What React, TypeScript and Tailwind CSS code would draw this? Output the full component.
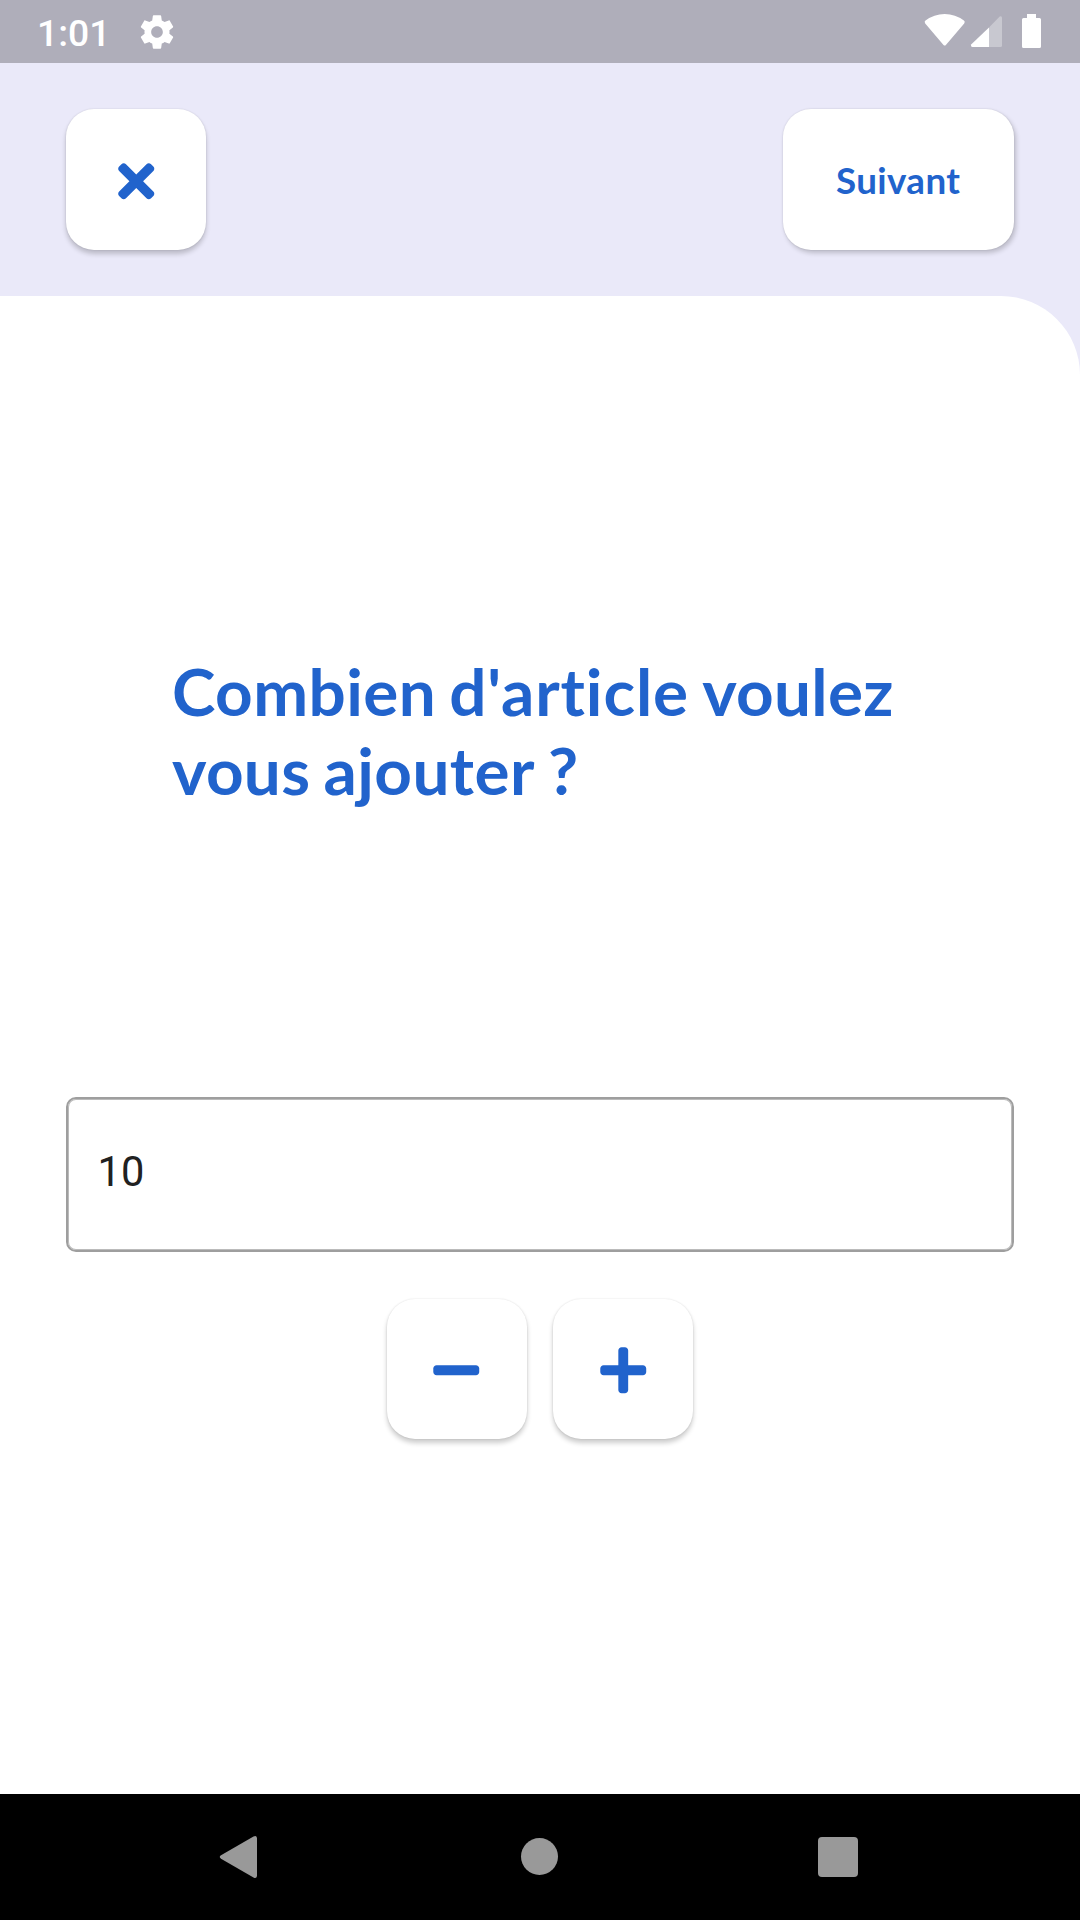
import type { ReactNode } from "react";
import { FaMinus, FaPlus, FaTimes } from "react-icons/fa";

function StatusBar() {
  return (
    <div className="flex h-[63px] shrink-0 items-start bg-[#afaeba] text-white">
      <span className="ml-[37px] mt-[12px] w-[70px] font-['Roboto',sans-serif] text-[37.3px] leading-[43px] font-medium">
        1:01
      </span>
      <svg className="ml-[30px] mt-[11.5px] h-10 w-10" viewBox="0 0 24 24" fill="currentColor">
        <path d="M19.43 12.98c.04-.32.07-.64.07-.98s-.03-.66-.07-.98l2.11-1.65c.19-.15.24-.42.12-.64l-2-3.46c-.12-.22-.39-.3-.61-.22l-2.49 1c-.52-.4-1.08-.73-1.69-.98l-.38-2.65C14.46 2.18 14.25 2 14 2h-4c-.25 0-.46.18-.49.42l-.38 2.65c-.61.25-1.17.59-1.69.98l-2.49-1c-.23-.09-.49 0-.61.22l-2 3.46c-.13.22-.07.49.12.64l2.11 1.65c-.04.32-.07.65-.07.98s.03.66.07.98l-2.11 1.65c-.19.15-.24.42-.12.64l2 3.46c.12.22.39.3.61.22l2.49-1c.52.4 1.08.73 1.69.98l.38 2.65c.03.24.24.42.49.42h4c.25 0 .46-.18.49-.42l.38-2.65c.61-.25 1.17-.59 1.69-.98l2.49 1c.23.09.49 0 .61-.22l2-3.46c.12-.22.07-.49-.12-.64l-2.11-1.65zM12 15.5c-1.93 0-3.5-1.57-3.5-3.5s1.57-3.5 3.5-3.5 3.5 1.57 3.5 3.5-1.57 3.5-3.5 3.5z" />
      </svg>
      <svg className="mr-[38px] ml-auto h-[63px] w-[120px]" viewBox="922 0 120 63" fill="currentColor">
        <path d="M925.2 23.4q-1.3-1.6.3-2.8Q934 14 944.7 14T963.9 20.6q1.6 1.2.3 2.8L945.9 45q-1.2 1.2-2.4 0z" />
        <path d="M989 27.5V47h-16.5q-2.3-.6-1.1-2.8z" />
        <path fillOpacity=".32" d="M989 27.5 999.7 16.6Q1002 15.5 1002 18v27.5q0 1.5-1.5 1.5H989z" />
        <path d="M1027 14h9v4h3.5q1.5 0 1.5 1.5v27q0 1.5-1.5 1.5h-16q-1.5 0-1.5-1.5v-27q0-1.5 1.5-1.5h3.5z" />
      </svg>
    </div>
  );
}

function CardButton({ label, wide, children }: { label: string; wide?: boolean; children: ReactNode }) {
  return (
    <button
      aria-label={label}
      className={`flex h-[140.5px] items-center justify-center rounded-[28px] bg-white text-[#2163cc] ${
        wide
          ? "w-[231px] shadow-[2px_3px_5px_rgba(0,0,0,0.2),0_0_2px_rgba(0,0,0,0.12)]"
          : "w-[140.3px] shadow-[0_4px_5px_rgba(0,0,0,0.2),0_0_2px_rgba(0,0,0,0.12)]"
      }`}
    >
      {children}
    </button>
  );
}

function NavigationBar() {
  return (
    <nav className="flex h-[126px] shrink-0 items-start bg-black text-[#999999]">
      <svg className="ml-[219px] mt-[42px] h-[42px] w-[38px]" viewBox="0 0 38 42" fill="currentColor">
        <path d="M38 2v38q-.5 3-3.5 1.5L2 22.7q-2.5-1.7 0-3.4L34.5.5Q37.5-1 38 2z" />
      </svg>
      <span className="ml-[264px] mt-[44px] h-[37px] w-[37px] rounded-full bg-[#999999]" />
      <span className="ml-[260px] mt-[43px] h-10 w-10 rounded-[4px] bg-[#999999]" />
    </nav>
  );
}

export default function App() {
  return (
    <div className="flex h-[1920px] w-[1080px] flex-col overflow-hidden bg-[#eae9f9]">
      <StatusBar />
      <header className="flex h-[233px] shrink-0 items-start justify-between px-[65.6px] pt-[46.2px]">
        <CardButton label="Fermer">
          <FaTimes className="mt-[4px] ml-[0.6px] text-[52.5px]" />
        </CardButton>
        <CardButton label="Suivant" wide>
          <span className="mt-[2px] mr-[1.5px] font-['Lato',sans-serif] text-[36.75px] font-bold tracking-[0.4px]">
            Suivant
          </span>
        </CardButton>
      </header>
      <main className="flex grow flex-col items-center rounded-tr-[79px] bg-white px-[65.6px]">
        <h1 className="mt-[355px] w-[736px] font-['Lato',sans-serif] text-[65.6px] leading-[79px] font-bold text-[#2163cc] [font-variant-ligatures:none] [word-spacing:-2.8px]">
          <span className="tracking-[0.4px]">Combien</span> <span className="tracking-[0.88px]">d'article</span>{" "}
          <span className="tracking-[0.3px]">voulez</span>
          <br />
          <span className="tracking-[0.3px]">vous</span> <span className="tracking-[0.45px]">ajouter</span> ?
        </h1>
        <input
          defaultValue="10"
          aria-label="Nombre d'articles"
          className="mt-[288px] h-[155px] w-full rounded-[10px] border-2 border-[#9e9e9e] px-[30px] pb-[6px] font-['Roboto',sans-serif] text-[41.6px] text-[#212121] shadow-[inset_0_0_0_1px_rgba(158,158,158,0.7)] outline-none"
        />
        <div className="mt-[46.7px] mr-[0.2px] flex gap-[26px]">
          <CardButton label="Retirer">
            <FaMinus className="mt-[2px] mr-[0.6px] text-[52.5px]" />
          </CardButton>
          <CardButton label="Ajouter">
            <FaPlus className="mt-[2px] mr-[0.6px] text-[52.5px]" />
          </CardButton>
        </div>
      </main>
      <NavigationBar />
    </div>
  );
}
